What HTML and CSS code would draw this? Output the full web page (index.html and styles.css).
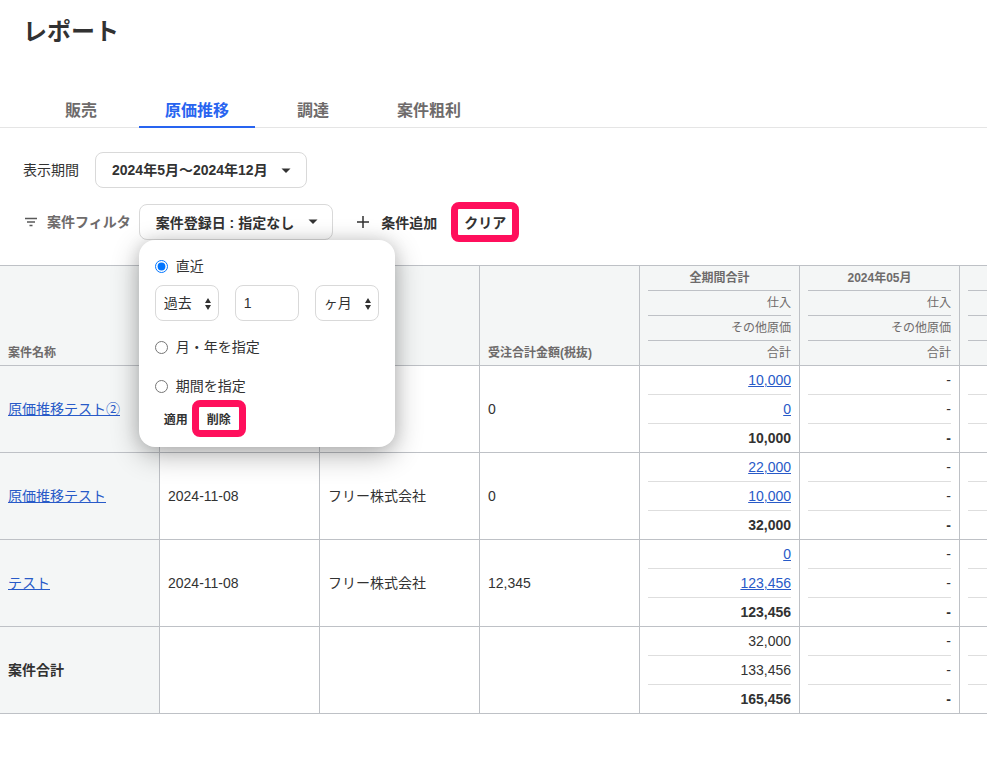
FILE: index.html
```
<!DOCTYPE html>
<html lang="ja">
<head>
    <meta charset="UTF-8">
    <meta name="viewport" content="width=device-width, initial-scale=1.0">
    <title>レポート</title>
    <link rel="stylesheet" href="styles.css">
</head>
<body>
    <header class="page-header">
        <h1>レポート</h1>
    </header>
    <nav class="tabs">
        <a href="#sales">販売</a>
        <a href="#cost" class="active" aria-current="page">原価推移</a>
        <a href="#procurement">調達</a>
        <a href="#profit">案件粗利</a>
    </nav>
    <main>
        <div class="filters">
            <div class="filter-row">
                <label class="filter-label" for="period">表示期間</label>
                <div class="select-wrap">
                    <select class="dropdown" id="period">
                        <option>2024年5月～2024年12月</option>
                    </select>
                    <svg class="caret" viewBox="0 0 10 6" aria-hidden="true"><path d="M0.500 0.500h9L5 5z"/></svg>
                </div>
            </div>
            <div class="filter-row">
                <span class="filter-title">
                    <svg class="filter-icon" viewBox="0 0 14 10" aria-hidden="true"><path d="M1 1.500h12M3 5h8M5.500 8.500h3"/></svg>
                    案件フィルタ
                </span>
                <div class="filter-menu">
                    <button type="button" class="dropdown" aria-expanded="true">
                        案件登録日 : 指定なし
                        <svg class="caret" viewBox="0 0 10 6" aria-hidden="true"><path d="M0.500 0.500h9L5 5z"/></svg>
                    </button>
                    <form class="popover">
                        <label class="radio"><input type="radio" name="range" checked> 直近</label>
                        <div class="recent">
                            <div class="select-wrap">
                                <select aria-label="方向"><option>過去</option></select>
                                <svg class="sort" viewBox="0 0 8 12" aria-hidden="true"><path d="M1 5l3-5 3 5zM1 7h6l-3 5z"/></svg>
                            </div>
                            <input type="text" value="1" aria-label="期間の数">
                            <div class="select-wrap">
                                <select aria-label="単位"><option>ヶ月</option></select>
                                <svg class="sort" viewBox="0 0 8 12" aria-hidden="true"><path d="M1 5l3-5 3 5zM1 7h6l-3 5z"/></svg>
                            </div>
                        </div>
                        <label class="radio"><input type="radio" name="range"> 月・年を指定</label>
                        <label class="radio"><input type="radio" name="range"> 期間を指定</label>
                        <div class="actions">
                            <button type="button">適用</button>
                            <button type="button" class="marked">削除</button>
                        </div>
                    </form>
                </div>
                <button type="button" class="add">
                    <svg class="plus" viewBox="0 0 14 14" aria-hidden="true"><path d="M7 1v12M1 7h12"/></svg>
                    条件追加
                </button>
                <button type="button" class="marked">クリア</button>
            </div>
        </div>

        <div class="table-wrap">
            <table class="report">
                <thead>
                    <tr>
                        <th>案件名称</th>
                        <th></th>
                        <th></th>
                        <th>受注合計金額(税抜)</th>
                        <th class="stack"><div>全期間合計</div><div>仕入</div><div>その他原価</div><div>合計</div></th>
                        <th class="stack"><div>2024年05月</div><div>仕入</div><div>その他原価</div><div>合計</div></th>
                        <th class="stack"><div></div><div></div><div></div><div></div></th>
                    </tr>
                </thead>
                <tbody>
                    <tr>
                        <th><a href="#p1">原価推移テスト②</a></th>
                        <td></td>
                        <td></td>
                        <td>0</td>
                        <td class="stack"><div><a href="#p1-1">10,000</a></div><div><a href="#p1-2">0</a></div><div>10,000</div></td>
                        <td class="stack"><div>-</div><div>-</div><div>-</div></td>
                        <td class="stack"><div></div><div></div><div></div></td>
                    </tr>
                    <tr>
                        <th><a href="#p2">原価推移テスト</a></th>
                        <td>2024-11-08</td>
                        <td>フリー株式会社</td>
                        <td>0</td>
                        <td class="stack"><div><a href="#p2-1">22,000</a></div><div><a href="#p2-2">10,000</a></div><div>32,000</div></td>
                        <td class="stack"><div>-</div><div>-</div><div>-</div></td>
                        <td class="stack"><div></div><div></div><div></div></td>
                    </tr>
                    <tr>
                        <th><a href="#p3">テスト</a></th>
                        <td>2024-11-08</td>
                        <td>フリー株式会社</td>
                        <td>12,345</td>
                        <td class="stack"><div><a href="#p3-1">0</a></div><div><a href="#p3-2">123,456</a></div><div>123,456</div></td>
                        <td class="stack"><div>-</div><div>-</div><div>-</div></td>
                        <td class="stack"><div></div><div></div><div></div></td>
                    </tr>
                    <tr>
                        <th class="total">案件合計</th>
                        <td></td>
                        <td></td>
                        <td></td>
                        <td class="stack"><div>32,000</div><div>133,456</div><div>165,456</div></td>
                        <td class="stack"><div>-</div><div>-</div><div>-</div></td>
                        <td class="stack"><div></div><div></div><div></div></td>
                    </tr>
                </tbody>
            </table>
        </div>
    </main>
</body>
</html>
```

FILE: styles.css
```
* {
    box-sizing: border-box;
}
body {
    margin: 0;
    font-family: 'Liberation Sans', 'Noto Sans CJK JP', sans-serif;
    font-size: 14px;
    line-height: 20px;
    color: #323232;
    background-color: #ffffff;
}
button, select, input {
    font-family: inherit;
    font-size: 14px;
    color: inherit;
}
button {
    padding: 0;
    border: none;
    background: none;
    font-weight: 700;
    white-space: nowrap;
    cursor: pointer;
}
svg {
    display: block;
    fill: #323232;
}
.page-header {
    padding: 12px 23px;
}
.page-header h1 {
    margin: 0;
    font-size: 24px;
    line-height: 40px;
}

/* Tabs */
.tabs {
    display: flex;
    gap: 16px;
    margin-top: 28px;
    padding: 0 39px;
    border-bottom: 1px solid #e5e5e5;
}
.tabs a {
    margin-bottom: -1px;
    padding: 4px 26px 0;
    border-bottom: 2px solid transparent;
    color: #6e6b6b;
    font-size: 16px;
    font-weight: 700;
    line-height: 30px;
    text-decoration: none;
}
.tabs a.active {
    color: #2864f0;
    border-color: #2864f0;
}

/* Filters */
.filters {
    display: flex;
    flex-direction: column;
    gap: 16px;
    padding: 24px 23px;
}
.filter-row {
    display: flex;
    align-items: center;
    height: 36px;
}
.filter-label {
    margin-right: 16px;
}
.filter-title {
    display: flex;
    align-items: center;
    gap: 9px;
    margin-right: 8px;
    padding-left: 1px;
    color: #6e6b6b;
    font-weight: 700;
}
.filter-icon {
    width: 14px;
    height: 10px;
    fill: none;
    stroke: #595959;
    stroke-width: 1.5;
}
.select-wrap {
    position: relative;
}
.select-wrap select {
    appearance: none;
}
.dropdown {
    display: flex;
    align-items: center;
    gap: 14px;
    height: 36px;
    padding: 0 14px 0 16px;
    border: 1px solid #d9d9d9;
    border-radius: 8px;
    background-color: #ffffff;
    font-weight: 700;
}
.caret {
    width: 10px;
    height: 6px;
}
select.dropdown {
    padding-right: 38px;
}
.select-wrap .caret {
    position: absolute;
    top: 16px;
    right: 16px;
    pointer-events: none;
}
.add {
    display: flex;
    align-items: center;
    gap: 11px;
    margin: 0 14px 0 23px;
}
.plus {
    width: 14px;
    height: 14px;
    fill: none;
    stroke: #323232;
    stroke-width: 1.5;
}
.marked {
    height: 40px;
    padding: 0 6px;
    border: 7px solid #ff0f5c;
    border-radius: 8px;
}

/* Filter popover */
.filter-menu {
    position: relative;
}
.popover {
    position: absolute;
    top: 36px;
    left: 0;
    z-index: 10;
    width: 256px;
    padding: 16px 16px 10px;
    border-radius: 16px;
    background-color: #ffffff;
    box-shadow: 0 0 16px rgba(0, 0, 0, 0.1), 0 8px 28px rgba(0, 0, 0, 0.3);
}
.radio {
    display: flex;
    align-items: center;
    gap: 8px;
    margin-bottom: 19px;
}
.radio input {
    width: 13px;
    height: 13px;
    margin: 0;
}
.recent {
    display: flex;
    gap: 16px;
    margin: -10px 0 16px;
}
.recent select, .recent input {
    display: block;
    width: 64px;
    height: 36px;
    padding: 0 8px;
    border: 1px solid #d9d9d9;
    border-radius: 8px;
    background-color: #ffffff;
}
.sort {
    position: absolute;
    top: 13px;
    right: 7px;
    width: 8px;
    height: 12px;
    pointer-events: none;
}
.actions {
    display: flex;
    align-items: center;
    gap: 4px;
    margin-top: -15px;
    padding-left: 9px;
}
.actions button {
    font-size: 12px;
}
.actions .marked {
    height: 37px;
    padding: 0 8px;
}

/* Report table */
.table-wrap {
    overflow: hidden;
    margin-top: 1px;
}
.report {
    width: 1120px;
    table-layout: fixed;
    border-spacing: 0;
    border-top: 1px solid #bec1c6;
}
.report th, .report td {
    padding: 0 8px;
    border-right: 1px solid #bec1c6;
    border-bottom: 1px solid #bec1c6;
    text-align: left;
}
.report th {
    background-color: #f4f6f6;
    font-weight: 400;
}
.report thead th {
    color: #6e6b6b;
    font-size: 12px;
    font-weight: 700;
    line-height: 24px;
    vertical-align: bottom;
}
.report .total {
    font-weight: 700;
}
.report a {
    color: #285ac8;
}
.stack div {
    height: 29px;
    border-bottom: 1px solid #dedede;
    line-height: 28px;
    text-align: right;
}
.stack div:last-child {
    height: 28px;
    border-bottom: none;
    font-weight: 700;
}
.report thead .stack div {
    height: 25px;
    border-color: #bec1c6;
    line-height: 24px;
}
.report thead .stack div + div {
    font-weight: 400;
}
.report thead .stack div:first-child {
    text-align: center;
}
.report thead .stack div:last-child {
    height: 24px;
}
```
